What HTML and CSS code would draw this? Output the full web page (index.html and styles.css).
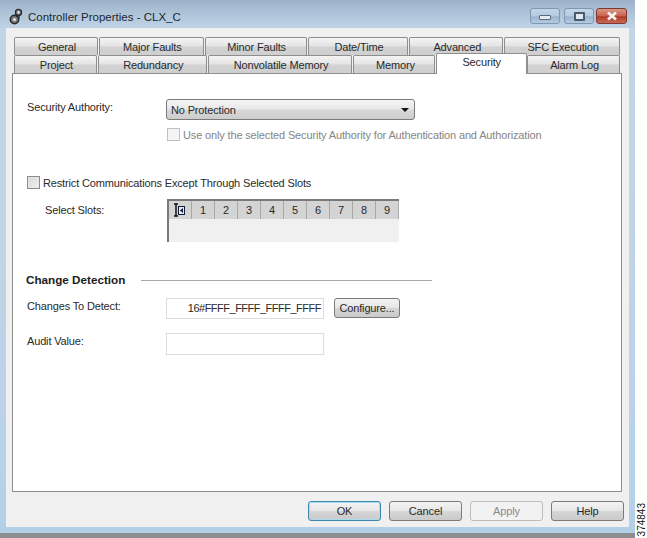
FILE: index.html
```html
<!DOCTYPE html>
<html lang="en">
<head>
<meta charset="utf-8">
<title>Controller Properties - CLX_C</title>
<link rel="stylesheet" href="styles.css">
</head>
<body>
<div class="stage">
  <div class="window">
    <header class="titlebar">
      <svg class="appicon" width="15" height="18" viewBox="0 0 15 18"><circle cx="5.5" cy="11.5" r="4.2" fill="#77797c" stroke="#26282a" stroke-width="1.5"/><circle cx="5.5" cy="11.5" r="1.6" fill="#e4e6e8"/><circle cx="9.5" cy="4.4" r="3" fill="#8b8d90" stroke="#26282a" stroke-width="1.4"/><circle cx="9.5" cy="4.4" r="1.1" fill="#eef0f2"/><path d="M8.5 7.5 7.5 9M10 7.5v3" stroke="#26282a" stroke-width="1.3"/></svg>
      <span class="title">Controller Properties - CLX_C</span>
      <div class="winbtns">
        <span class="wb wb-min"><i class="g-min"></i></span>
        <span class="wb wb-max"><i class="g-max"></i></span>
        <span class="wb wb-close"><svg width="16" height="10" viewBox="0 0 16 10"><path d="M4 1.5 12 8.5M12 1.5 4 8.5" stroke="#f8f2f0" stroke-width="2.8" fill="none"/></svg></span>
      </div>
    </header>
    <div class="client">
      <div class="tabs">
        <div class="tabrow row1">
          <span class="tab t-gen">General</span><span class="tab t-maj">Major Faults</span><span class="tab t-min">Minor Faults</span><span class="tab t-dat">Date/Time</span><span class="tab t-adv">Advanced</span><span class="tab t-sfc">SFC Execution</span>
        </div>
        <div class="tabrow row2">
          <span class="tab t-pro">Project</span><span class="tab t-red">Redundancy</span><span class="tab t-non">Nonvolatile Memory</span><span class="tab t-mem">Memory</span><span class="tab t-sec">Security</span><span class="tab t-ala">Alarm Log</span>
        </div>
      </div>
      <main class="panel">
        <div class="field f-auth">
          <label class="lbl">Security Authority:</label>
          <div class="combo"><span>No Protection</span><i class="arrow"></i></div>
        </div>
        <div class="check c-use"><i class="box box-dis"></i><span>Use only the selected Security Authority for Authentication and Authorization</span></div>
        <div class="check c-res"><i class="box box-on"></i><span>Restrict Communications Except Through Selected Slots</span></div>
        <div class="field f-slots">
          <label class="lbl lbl-in">Select Slots:</label>
          <div class="grid">
            <div class="gridhead">
              <span class="cell cell0"><svg width="14" height="15" viewBox="0 0 14 15"><path d="M1 1h4M3 1v12M1 13h4" stroke="#111" stroke-width="1.5" fill="none"/><rect x="5.5" y="3.5" width="6" height="8" fill="#e6e8f2" stroke="#111b3a" stroke-width="1"/><path d="M10 5 7 7.5 10 10z" fill="#111b3a"/></svg></span>
              <span class="cell">1</span><span class="cell">2</span><span class="cell">3</span><span class="cell">4</span><span class="cell">5</span><span class="cell">6</span><span class="cell">7</span><span class="cell">8</span><span class="cell">9</span>
            </div>
          </div>
        </div>
        <div class="group"><b>Change Detection</b><i class="rule"></i></div>
        <div class="field f-det">
          <label class="lbl">Changes To Detect:</label>
          <div class="edit edit-r">16#FFFF_FFFF_FFFF_FFFF</div>
          <span class="btn btn-cfg">Configure...</span>
        </div>
        <div class="field f-aud">
          <label class="lbl">Audit Value:</label>
          <div class="edit"></div>
        </div>
      </main>
      <footer class="actions">
        <span class="btn btn-act btn-def">OK</span>
        <span class="btn btn-act">Cancel</span>
        <span class="btn btn-act btn-dis">Apply</span>
        <span class="btn btn-act">Help</span>
      </footer>
    </div>
  </div>
  <div class="side"><span class="figno">374843</span></div>
</div>
</body>
</html>
```
FILE: styles.css
```css
* { box-sizing: border-box; }
html, body { margin: 0; padding: 0; background: #fff; }
body { width: 647px; height: 538px; overflow: hidden; font-family: "Liberation Sans", Arial, sans-serif; font-size: 11px; letter-spacing: -0.15px; line-height: 14px; color: #2a2a2a; }
.stage { display: flex; align-items: flex-start; width: 647px; height: 538px; }
.window { width: 635px; height: 538px; padding: 0 6px 6px 6px; background: linear-gradient(180deg, #c2d6e8 0, #bdd3e7 70%, #b4d0e8 100%); border-bottom: 5px solid #8c8e90; display: flex; flex-direction: column; }
.titlebar { height: 28px; margin: 0 -6px; padding: 8px 8px 0 9px; display: flex; align-items: flex-start; background: linear-gradient(180deg, #9cb2ca 0, #aec3d8 45%, #c0d3e6 100%); }
.appicon { margin-right: 4px; flex: none; }
.title { font-size: 11.5px; letter-spacing: 0; color: #20272e; margin-top: 2px; }
.winbtns { margin-left: auto; display: flex; }
.wb { height: 16px; display: flex; align-items: center; justify-content: center; border: 1px solid #7f97b0; border-radius: 3px; background: linear-gradient(180deg, #c4d6e7 0, #b4cade 50%, #9ab4ce 55%, #b4cbe0 100%); }
.wb-min { width: 30px; margin-right: 4px; }
.wb-max { width: 30px; margin-right: 2px; }
.wb-close { width: 31px; border-color: #7e3a30; background: linear-gradient(180deg, #d99a86 0, #c9614d 50%, #b03c28 55%, #c86a54 100%); }
.g-min { display: block; width: 12px; height: 5px; margin-top: 2px; background: #e6ecf2; border: 1px solid #5a6a7c; border-radius: 1px; }
.g-max { display: block; width: 11px; height: 9px; background: #dfe7ef; border: 2px solid #4a5a6c; border-radius: 1px; }
.client { flex: 1; display: flex; flex-direction: column; background: #f0f0f0; padding: 9px 7px 0 6px; }
.tabs { display: flex; flex-direction: column; height: 36px; padding-left: 2px; padding-right: 2px; }
.tabrow { display: flex; height: 18px; }
.tab { display: flex; align-items: center; justify-content: center; height: 18px; padding: 1px 0 0 2px; border: 1px solid #8e8e8e; border-bottom: 0; border-radius: 2px 2px 0 0; background: linear-gradient(180deg, #f4f4f4 0, #e4e4e4 48%, #d2d2d2 52%, #cfcfcf 100%); color: #2a2a2a; margin-right: 1px; }
.t-gen { width: 84px; } .t-maj { width: 105px; } .t-min { width: 102px; } .t-dat { width: 101px; } .t-adv { width: 94px; } .t-sfc { width: 116px; margin-right: 0; }
.t-pro { width: 83px; } .t-red { width: 109px; } .t-non { width: 145px; } .t-mem { width: 82px; } .t-ala { width: 93px; margin-right: 0; }
.t-sec { width: 91px; height: 21px; margin-top: -2px; margin-right: 0; padding: 0 0 5px; background: #fff; position: relative; z-index: 2; }
.panel { height: 419px; background: #fff; border: 1px solid #8e8e8e; display: flex; flex-direction: column; }
.field { display: flex; align-items: flex-start; }
.lbl { display: block; width: 153px; padding: 1px 0 0 14px; flex: none; }
.lbl-in { padding: 4px 0 0 32px; }
.f-auth { margin-top: 25px; }
.combo { width: 249px; height: 21px; display: flex; align-items: center; justify-content: space-between; padding: 0 5px 0 4px; border: 1px solid #7b7b7b; border-radius: 3px; background: linear-gradient(180deg, #f5f5f5 0, #e8e8e8 48%, #d8d8d8 52%, #cdcdcd 100%); }
.arrow { width: 0; height: 0; border-left: 4px solid transparent; border-right: 4px solid transparent; border-top: 4px solid #111; }
.check { display: flex; align-items: center; height: 13px; }
.c-use { margin: 8px 0 0 154px; color: #858585; }
.c-res { margin: 35px 0 0 14px; }
.box { display: block; width: 13px; height: 13px; margin-right: 3px; flex: none; }
.box-dis { border: 1px solid #c0c0c0; background: #f4f4f4; }
.box-on { border: 1px solid #8c8c8c; background: linear-gradient(135deg, #d6d6d6, #f2f2f2); box-shadow: inset 0 0 0 1px #e6e6e6; }
.f-slots { margin-top: 10px; }
.grid { width: 232px; height: 43px; margin-left: 1px; background: #f0f0f0; border-left: 2px solid #7a7a7a; border-top: 2px solid #7a7a7a; }
.gridhead { display: flex; height: 18px; background: #d4d4d4; }
.cell { width: 23px; display: flex; align-items: center; justify-content: center; border-right: 1px solid #a8a8a8; color: #2a2a2a; }
.group { display: flex; align-items: center; margin: 31px 0 0 13px; height: 14px; }
.group b { font-size: 11.7px; letter-spacing: 0; color: #1c1c1c; }
.rule { display: block; width: 291px; height: 1px; background: #a8a8a8; margin-left: 16px; }
.f-det { margin-top: 11px; }
.edit { width: 158px; height: 22px; border: 1px solid #dcdcdc; background: #fff; line-height: 18px; padding-right: 2px; letter-spacing: -0.5px; }
.edit-r { text-align: right; }
.f-det .edit { height: 21px; }
.btn { display: flex; align-items: center; justify-content: center; border: 1px solid #7b7b7b; border-radius: 3px; background: linear-gradient(180deg, #f4f4f4 0, #e6e6e6 48%, #d6d6d6 52%, #cacaca 100%); color: #2a2a2a; }
.btn-cfg { width: 66px; height: 20px; margin-left: 10px; }
.f-aud { margin-top: 14px; }
.actions { flex: 1; display: flex; justify-content: flex-end; gap: 8px; padding: 9px 0 0 0; margin-right: -2px; }
.btn-act { width: 73px; height: 20px; }
.btn-def { border-color: #3f88ad; box-shadow: inset 0 0 0 1px #a9dcf0; }
.btn-dis { border-color: #bdbdbd; background: #f2f2f2; color: #8a8a8a; }
.side { flex: 1; height: 538px; display: flex; align-items: flex-end; padding-bottom: 2px; }
.figno { writing-mode: vertical-rl; transform: rotate(180deg); font-size: 10px; letter-spacing: 0; line-height: 10px; color: #111; margin-left: 2px; }
```
